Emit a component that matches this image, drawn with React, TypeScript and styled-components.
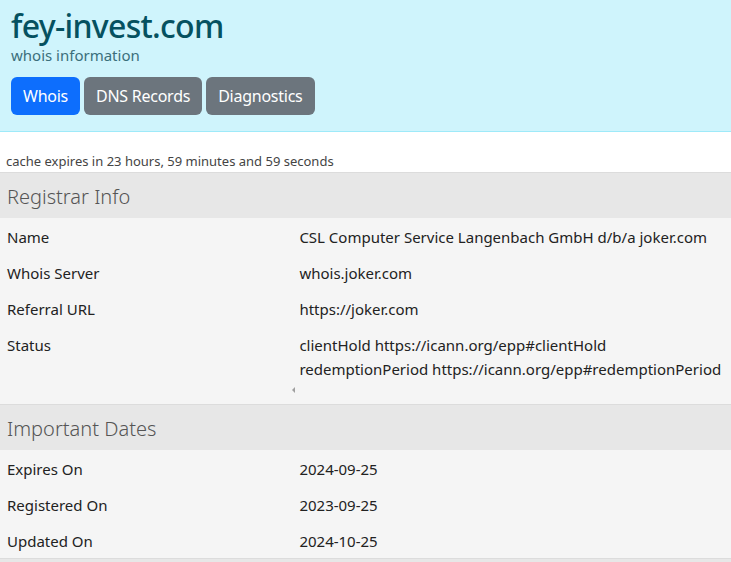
import React from "react";
import styled, { createGlobalStyle } from "styled-components";

const Global = createGlobalStyle`
  html, body { margin: 0; padding: 0; background: #ffffff; }
  body { font-family: "Noto Sans", "Open Sans", sans-serif; color: #212529; }
  * { box-sizing: border-box; }
`;

const Header = styled.header`
  background: #cff4fc;
  border-bottom: 1px solid #9eeaf9;
  padding: 6px 11px 16px;
`;

const Title = styled.h1`
  margin: 0;
  font-size: 32px;
  line-height: 40px;
  font-weight: 500;
  letter-spacing: -0.7px;
  color: #055160;
`;

const Subtitle = styled.div`
  font-size: 15px;
  line-height: 20px;
  color: #3b6f7b;
  margin-top: -1px;
`;

const Nav = styled.nav`
  display: flex;
  gap: 4px;
  margin-top: 12px;
`;

const Tab = styled.button<{ $active?: boolean }>`
  font-family: inherit;
  font-size: 16px;
  line-height: 24px;
  letter-spacing: -0.25px;
  padding: 7px 12px;
  border: none;
  border-radius: 6px;
  color: #fff;
  background: ${(p) => (p.$active ? "#0d6efd" : "#6c757d")};
  cursor: pointer;
`;

const Cache = styled.div`
  padding: 21px 6px 2px;
  font-size: 13px;
  line-height: 17px;
  color: #444;
`;

const SectionHead = styled.h2`
  margin: 0;
  background: #e7e7e7;
  border-top: 1px solid #dcdcdc;
  font-size: 20px;
  font-weight: 300;
  line-height: 24px;
  padding: 12px 7px 9px;
  color: #555;
`;

const Table = styled.div`
  background: #f5f5f5;
`;

const Row = styled.div`
  display: grid;
  grid-template-columns: 40% 60%;
  font-size: 15px;
  line-height: 24px;
  color: #222;
`;

const Cell = styled.div`
  padding: 7px 7px 5px;
  white-space: nowrap;
`;

const ScrollHint = styled.div`
  height: 18px;
  position: relative;
`;

const Arrow = styled.span`
  position: absolute;
  left: 292px;
  top: 1px;
  width: 0;
  height: 0;
  border-top: 3px solid transparent;
  border-bottom: 3px solid transparent;
  border-right: 3px solid #a0a0a0;
`;

const Footer = styled.div`
  height: 10px;
  background: #e7e7e7;
  border-top: 1px solid #dcdcdc;
`;

const registrar: [string, string[]][] = [
  ["Name", ["CSL Computer Service Langenbach GmbH d/b/a joker.com"]],
  ["Whois Server", ["whois.joker.com"]],
  ["Referral URL", ["https://joker.com"]],
  [
    "Status",
    [
      "clientHold https://icann.org/epp#clientHold",
      "redemptionPeriod https://icann.org/epp#redemptionPeriod",
    ],
  ],
];

const dates: [string, string][] = [
  ["Expires On", "2024-09-25"],
  ["Registered On", "2023-09-25"],
  ["Updated On", "2024-10-25"],
];

export default function App() {
  return (
    <>
      <Global />
      <Header>
        <Title>fey-invest.com</Title>
        <Subtitle>whois information</Subtitle>
        <Nav>
          <Tab $active>Whois</Tab>
          <Tab>DNS Records</Tab>
          <Tab>Diagnostics</Tab>
        </Nav>
      </Header>
      <Cache>cache expires in 23 hours, 59 minutes and 59 seconds</Cache>
      <SectionHead>Registrar Info</SectionHead>
      <Table>
        {registrar.map(([k, v]) => (
          <Row key={k}>
            <Cell>{k}</Cell>
            <Cell>
              {v.map((line) => (
                <div key={line}>{line}</div>
              ))}
            </Cell>
          </Row>
        ))}
        <ScrollHint>
          <Arrow />
        </ScrollHint>
      </Table>
      <SectionHead>Important Dates</SectionHead>
      <Table>
        {dates.map(([k, v]) => (
          <Row key={k}>
            <Cell>{k}</Cell>
            <Cell>{v}</Cell>
          </Row>
        ))}
      </Table>
      <Footer />
    </>
  );
}
